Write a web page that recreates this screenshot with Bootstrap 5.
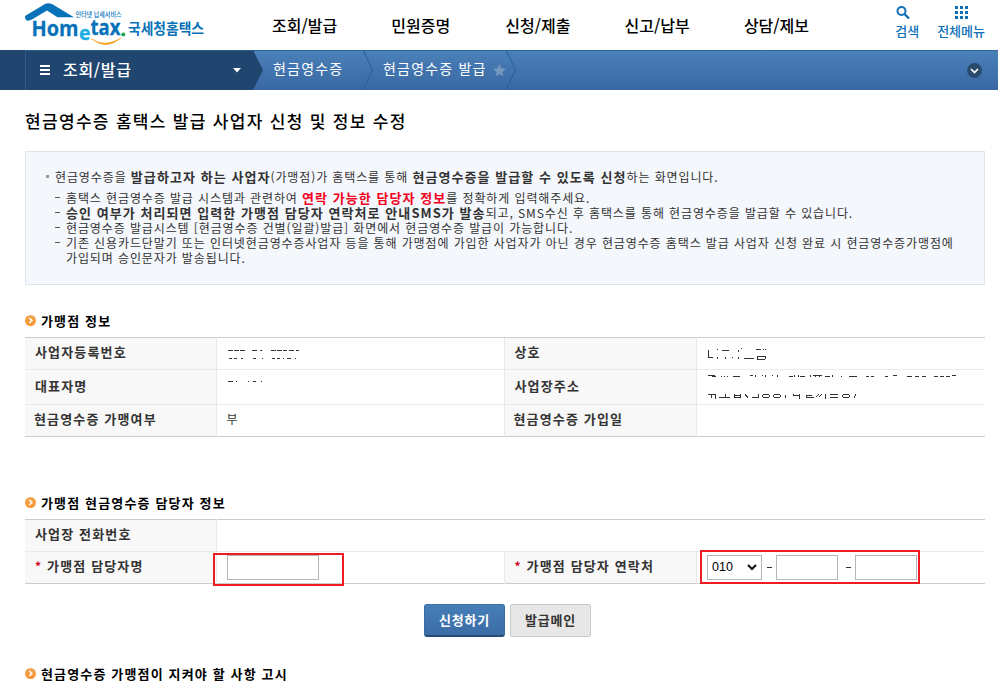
<!DOCTYPE html>
<html lang="ko">
<head>
<meta charset="utf-8">
<meta name="viewport" content="width=device-width, initial-scale=1">
<title>국세청홈택스</title>
<link href="https://cdn.jsdelivr.net/npm/bootstrap@5.3.0/dist/css/bootstrap.min.css" rel="stylesheet">
<style>
body{font-family:"Noto Sans CJK KR",sans-serif;font-size:12px;color:#333;background:#fff;overflow:hidden;height:684px;white-space:nowrap}
svg{display:block;flex:none}
.site-head{height:50px;padding-left:20px}
.main-menu{padding-left:52px;font-size:16px;font-weight:500;color:#000;line-height:24px;padding-top:13px}
.main-menu a{width:119.3px;flex:none}
.main-menu a:nth-child(2){width:114px}
.tool{color:#0f70b7;font-size:13px;line-height:18px;font-weight:500}
.crumb-bar{height:40px;background:linear-gradient(#4b80b9,#3868a3);border-top:1px solid #2f639b;color:#fff;font-size:14px;letter-spacing:1.2px}
.crumb-bar svg{margin-top:-1px}
.crumb-bar span{margin-top:-4px}
.crumb-home{width:253px;height:40px;margin-top:-1px;background:#20466f;padding-left:25px}
.crumb-home>div{border-left:1px solid #2c5d8c;border-top:1px solid #2c5d8c;padding-left:13px;font-size:16px;font-weight:500;letter-spacing:.7px;width:228px}
.page-title{font-size:17px;letter-spacing:1.32px;font-weight:500;color:#000;line-height:24px;margin:19px 0 18px}
.notice{height:134px;background:#f4f7fc;border:1px solid #dde4eb;letter-spacing:.89px;line-height:15px;padding:17px 0 0 20px}
.notice b{font-size:13px;letter-spacing:1.06px;line-height:15px}
.bullet{width:3px;height:3px;background:#999;margin-right:6px}
.dash-list{padding:6px 0 0 9px;margin:0;list-style:none}
.dash-list li{display:flex;height:15px}
.dash-list li:last-child{height:30px}
.dash-list li::before{content:"";width:5px;height:1px;background:#555;margin:7px 6px 0 0;flex:none}
.section-name{font-size:13px;font-weight:700;letter-spacing:1.15px;color:#000;line-height:16px;gap:5px}
.info-table{table-layout:fixed;width:960px;border-collapse:collapse;border-top:1px solid #ccc;border-bottom:1px solid #ccc;margin:0}
.info-table th,.info-table td{padding:0 0 0 10px;border-top:1px solid #e9e9e9;vertical-align:middle;line-height:16px}
.info-table th,.info-table td.word{padding-bottom:3px}
.info-table tr:first-child>*{border-top-color:#ccc}
.info-table th{background:#f8f8f8;font-size:13px;letter-spacing:1.15px;border-right:1px solid #e9e9e9;color:#333}
.info-table td+th{border-left:1px solid #e9e9e9}
.req{color:#d0021b;font-size:12px}
.field{height:25px;border:1px solid #b5b5b5;border-radius:0;padding:0;background:#fff}
.marked{border:2px solid #eb1c24}
.name-mark{width:131px;height:33px;left:213px;top:34px;padding-left:12px}
.phone-mark{width:220px;height:34px;left:700px;top:31px;padding-left:5px;font-size:12px}
.field-code{width:55px;font-family:"Liberation Sans",sans-serif;font-size:12.5px;color:#000;padding:0 4px}
.sep{height:1px;width:5px;background:#333}
.act{height:33px;width:81px;font-size:13px;font-weight:700;letter-spacing:.8px;border-radius:3px;padding:0 0 1px}
.act-go{background:linear-gradient(#477eb8,#3b6ca6);color:#fff;border:1px solid #3b6ca4;border-bottom:2px solid #234c78}
.act-back{background:#e7e7e7;color:#333;border:1px solid #c9c9c9;border-radius:2px}
</style>
<script src="https://cdn.jsdelivr.net/npm/bootstrap@5.3.0/dist/js/bootstrap.bundle.min.js"></script>
</head>
<body>
<svg width="0" height="0" class="position-absolute"><defs>
<linearGradient id="og" x1="0" y1="0" x2="0" y2="1"><stop offset="0" stop-color="#eda753"/><stop offset="1" stop-color="#fa942f"/></linearGradient>
<symbol id="dot" viewBox="0 0 11 11"><circle cx="5.5" cy="5.5" r="5.5" fill="url(#og)"/><path d="M4.3 3l2.6 2.5L4.3 8" fill="none" stroke="#fff" stroke-width="1.5"/></symbol>
</defs></svg>
<header class="site-head d-flex">
  <svg width="200" height="50" viewBox="20 0 200 50">
    <path d="M27 20.500Q25 20 25 16L45 4Q48 2.500 52 4L74 17.300H57.500L47 10.500L32 19.500Q29 21 27 20.500Z" fill="#0872b9"/>
    <g font-family="Open Sans" font-weight="700" fill="#0872b9" stroke="#0872b9" stroke-width=".3">
      <text x="31.500" y="35.500" font-size="21.500" textLength="47" lengthAdjust="spacingAndGlyphs">Hom</text>
      <text x="79" y="39.500" font-size="20" fill="#1baee5" stroke="#1baee5" textLength="11.500" lengthAdjust="spacingAndGlyphs">e</text>
      <text x="90.500" y="35" font-size="21.500" textLength="30" lengthAdjust="spacingAndGlyphs">tax</text></g>
    <circle cx="123.300" cy="34.500" r="2" fill="#22a54a"/>
    <path d="M91 38.500Q105 48 121 38Q106 51 91 38.500Z" fill="#f6a01b" stroke="#f6a01b" stroke-width=".5"/>
    <text x="75.500" y="16.500" font-size="6.600" font-weight="500" font-family="Noto Sans CJK KR" fill="#0872b9" textLength="46" lengthAdjust="spacingAndGlyphs">인터넷 납세서비스</text>
    <text x="128" y="33.500" font-size="14.500" font-weight="700" font-family="Noto Sans CJK KR" fill="#0872b9" textLength="76" lengthAdjust="spacingAndGlyphs">국세청홈택스</text>
  </svg>
  <nav class="main-menu d-flex"><a>조회/발급</a><a>민원증명</a><a>신청/제출</a><a>신고/납부</a><a>상담/제보</a></nav>
  <div class="tool ms-auto d-flex text-center" style="padding-right:13px;gap:18px">
    <div><svg class="mx-auto" width="14" height="14" viewBox="0 0 14 14" style="margin:6px 0 2px;transform:translateX(-4px)"><circle cx="5.500" cy="5" r="4" fill="none" stroke="#0f70b7" stroke-width="2"/><path d="M8.500 8l4.500 4.500" stroke="#0f70b7" stroke-width="2.400"/></svg>검색</div>
    <div><svg class="mx-auto" width="13" height="14" viewBox="0 0 13 14" style="margin:6px 0 2px" fill="#0f70b7"><path d="M0 0h3v3H0zM5 0h3v3H5zM10 0h3v3h-3zM0 5h3v3H0zM5 5h3v3H5zM10 5h3v3h-3zM0 10h3v3H0zM5 10h3v3H5zM10 10h3v3h-3z"/></svg>전체메뉴</div>
  </div>
</header>
<div class="crumb-bar d-flex align-items-center">
  <div class="crumb-home d-flex"><div class="d-flex align-items-center">
    <svg width="12" height="12" viewBox="0 0 12 12"><path d="M1 2h10M1 6h10M1 10h10" stroke="#fff" stroke-width="2"/></svg>
    <span style="margin-left:12px">조회/발급</span>
    <svg width="8" height="5" class="ms-auto" style="margin-right:12px"><path d="M0 0h8L4 4.500z" fill="#fff"/></svg></div></div>
  <svg width="10" height="40"><path d="M0 0L10 20L0 40z" fill="#20466f"/></svg>
  <span style="margin-left:10px;width:90px">현금영수증</span>
  <svg width="10" height="40"><path d="M0 0L9.500 20L0 40" fill="none" stroke="#255f96"/></svg>
  <span style="margin-left:10px;width:110px">현금영수증 발급</span>
  <svg width="13" height="13" viewBox="0 0 13 13"><path d="M6.500 0l1.900 4.300 4.600.5-3.500 3.100 1 4.700-4-2.400-4 2.400 1-4.700L0 4.800l4.600-.5z" fill="#7396bd"/></svg>
  <svg width="10" height="40"><path d="M0 0L9.500 20L0 40" fill="none" stroke="#255f96"/></svg>
  <svg class="ms-auto" style="margin-right:16px" width="15" height="15" viewBox="0 0 15 15"><circle cx="7.500" cy="7.500" r="7.400" fill="#294a6c"/><path d="M4 6l3.500 3.500L11 6" fill="none" stroke="#fff" stroke-width="1.700"/></svg>
</div>
<main style="padding-left:25px;width:985px">
  <h1 class="page-title">현금영수증 홈택스 발급 사업자 신청 및 정보 수정</h1>
  <div class="notice">
    <div class="d-flex align-items-center"><span class="bullet"></span><span>현금영수증을 <b>발급하고자 하는 사업자</b>(가맹점)가 홈택스를 통해 <b>현금영수증을 발급할 수 있도록 신청</b>하는 화면입니다.</span></div>
    <ul class="dash-list">
      <li><span>홈택스 현금영수증 발급 시스템과 관련하여 <b style="color:#f3001c">연락 가능한 담당자 정보</b>를 정확하게 입력해주세요.</span></li>
      <li><span><b>승인 여부가 처리되면 입력한 가맹점 담당자 연락처로 안내SMS가 발송</b>되고, SMS수신 후 홈택스를 통해 현금영수증을 발급할 수 있습니다.</span></li>
      <li><span>현금영수증 발급시스템 [현금영수증 건별(일괄)발급] 화면에서 현금영수증 발급이 가능합니다.</span></li>
      <li><span>기존 신용카드단말기 또는 인터넷현금영수증사업자 등을 통해 가맹점에 가입한 사업자가 아닌 경우 현금영수증 홈택스 발급 사업자 신청 완료 시 현금영수증가맹점에<br>가입되며 승인문자가 발송됩니다.</span></li>
    </ul>
  </div>
  <div class="section-name d-flex align-items-center" style="margin:28px 0 8px"><svg width="11" height="11" style="margin-top:-2px"><use href="#dot"/></svg>가맹점 정보</div>
  <table class="info-table">
    <colgroup><col style="width:191px"><col style="width:288px"><col style="width:192px"><col></colgroup>
    <tr style="height:32px"><th>사업자등록번호</th><td><svg width="74" height="12" shape-rendering="crispEdges" stroke="#333"><path d="M1 2.500h5m1 0h5m1 0h5m7 0h5m3 0h2m9 0h5m1 0h5m1 0h4m2 0h5m2 0h3M2 10.500h3m2 0h3m4 0h2m10 0h3m6 0h1m9 0h3m2 0h3m3 0h1m3 0h4m4 0h1"/></svg></td><th>상호</th><td><svg width="62" height="14" shape-rendering="crispEdges" stroke="#333"><path d="M1.500 3v7M1 10.500h5M10.500 2v1M10.500 10v2M15 3.500h7M18.500 10v2M25.500 10v1M31.500 3v2M31.500 10v2M37 11.500h10M34.500 1v1M49 2.500h5M56.500 2v1M58.500 2v1M50.500 9v3M50 12.500h8M58.500 9v3M50 9.500h8"/></svg></td></tr>
    <tr style="height:35px"><th>대표자명</th><td><svg width="40" height="14" shape-rendering="crispEdges" stroke="#333"><path d="M1 1.500h5M9 1.500h1M21 1.500h1M26 1.500h3M34 1.500h1"/></svg></td><th>사업장주소</th><td><svg width="260" height="30" shape-rendering="crispEdges" stroke="#333"><path d="M1 3.500h7M5 4.500h4M14 4.500h1M17 4.500h1M20 4.500h1M26 4.500h7M43 3.500h3M48.500 3v2M55 3.500h1M58.500 3v2M65 3.500h1M70.500 3v2M82 4.500h4M87.500 3v2M91.500 3v2M93 4.500h5M103.500 3v2M106 3.500h9M108.500 3v2M112.500 3v2M118 4.500h5M125.500 3v2M134 4.500h1M142 4.500h8M159 4.500h3m2 0h3M178 4.500h3M186 3.500h4M200 4.500h5m3 0h4m3 0h4M227 4.500h4m2 0h4m2 0h4M245 3.500h4"/><path d="M1 22.500h7M4.500 23v3M8.500 22v5M12 25.500h11M18.500 22v3M27.500 22v4M33.500 22v4M27 23.500h7M27 25.500h7M38 22l3 4M45 25.500h7M51.500 22v3M56 22.500h6M56 25.500h6M55.500 23v2M62.500 23v2M67 22.500h6M67 25.500h6M66.500 23v2M73.500 23v2M78 26l1-3M86 23.500h6M92.500 22v5M86.500 22v2M99 23.500h6M99.500 23v3M99 25.500h8M109 25l3-3M112 25l3-3M118.500 22v5M123 22.500h8M123 25.500h8M136 22.500h6M136 25.500h6M135.500 23v2M142.500 23v2M147 26l2-4" fill="none"/></svg></td></tr>
    <tr style="height:32px"><th style="padding-left:9px">현금영수증 가맹여부</th><td class="word">부</td><th style="padding-left:9px">현금영수증 가입일</th><td></td></tr>
  </table>
  <div class="section-name d-flex align-items-center" style="margin:58px 0 8px"><svg width="11" height="11" style="margin-top:-2px"><use href="#dot"/></svg>가맹점 현금영수증 담당자 정보</div>
  <div class="position-relative">
  <table class="info-table">
    <colgroup><col style="width:191px"><col style="width:288px"><col style="width:192px"><col></colgroup>
    <tr style="height:32px"><th>사업장 전화번호</th><td colspan="3"></td></tr>
    <tr style="height:32px"><th><span class="req">*</span> 가맹점 담당자명</th><td></td><th><span class="req">*</span> 가맹점 담당자 연락처</th><td></td></tr>
  </table>
  <div class="marked name-mark position-absolute" style="margin-left:-25px"><input class="field d-block" style="width:92px" aria-label="담당자명"></div>
  <div class="marked phone-mark position-absolute d-flex align-items-center" style="margin-left:-25px">
    <div class="field field-code d-flex align-items-center justify-content-between">010<svg width="10" height="7"><path d="M1 1l4 4 4-4" fill="none" stroke="#111" stroke-width="2.200"/></svg></div>
    <span class="sep" style="margin:0 4px 0 5px"></span><input class="field" style="width:62px" aria-label="연락처 중간"><span class="sep" style="margin:0 4px 0 8px"></span><input class="field" style="width:62px" aria-label="연락처 끝">
  </div>
  </div>
  <div class="d-flex" style="gap:5px;margin:20px 0 0 399px"><button class="btn act act-go">신청하기</button><button class="btn act act-back">발급메인</button></div>
  <div class="section-name d-flex align-items-center" style="margin-top:29px"><svg width="11" height="11" style="margin-top:-2px"><use href="#dot"/></svg>현금영수증 가맹점이 지켜야 할 사항 고시</div>
</main>
</body>
</html>
